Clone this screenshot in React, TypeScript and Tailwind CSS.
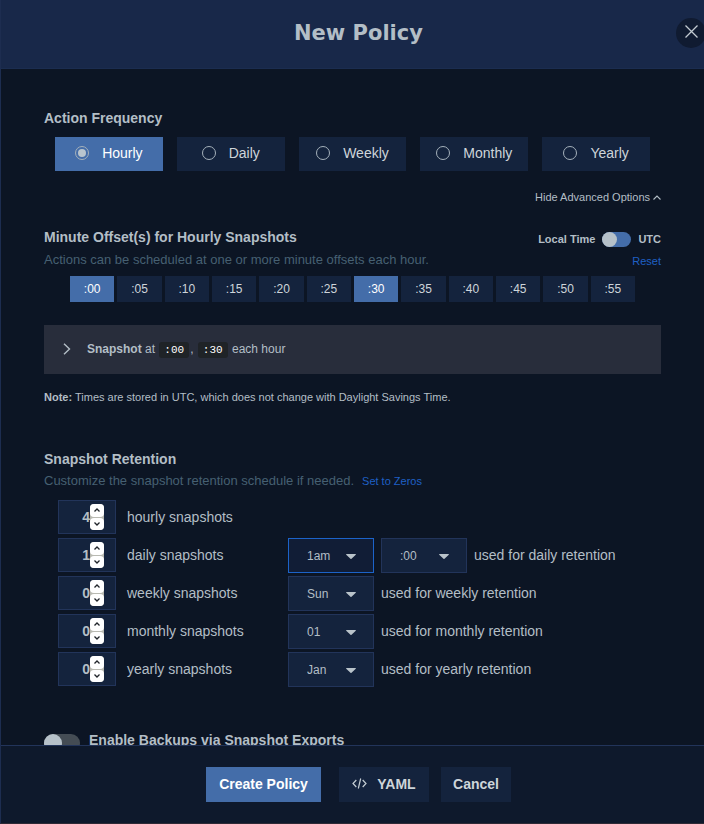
import { useState } from "react";

const frequencies = ["Hourly", "Daily", "Weekly", "Monthly", "Yearly"];

const minutes = [":00", ":05", ":10", ":15", ":20", ":25", ":30", ":35", ":40", ":45", ":50", ":55"];

const hours = ["12am", "1am", "2am", "3am", "4am", "5am", "6am", "7am", "8am", "9am", "10am", "11am"];
const weekdays = ["Sun", "Mon", "Tue", "Wed", "Thu", "Fri", "Sat"];
const monthDays = ["01", "02", "03", "04", "05", "06", "07", "08", "09", "10"];
const months = ["Jan", "Feb", "Mar", "Apr", "May", "Jun", "Jul", "Aug", "Sep", "Oct", "Nov", "Dec"];

type Picker = { id: string; value: string; options: string[]; active?: boolean };
type RetentionRow = { unit: string; count: number; pickers: Picker[] };

const retention: RetentionRow[] = [
  { unit: "hourly", count: 4, pickers: [] },
  {
    unit: "daily",
    count: 1,
    pickers: [
      { id: "daily-hour", value: "1am", options: hours, active: true },
      { id: "daily-minute", value: ":00", options: minutes },
    ],
  },
  { unit: "weekly", count: 0, pickers: [{ id: "weekly-day", value: "Sun", options: weekdays }] },
  { unit: "monthly", count: 0, pickers: [{ id: "monthly-day", value: "01", options: monthDays }] },
  { unit: "yearly", count: 0, pickers: [{ id: "yearly-month", value: "Jan", options: months }] },
];

function PickerSelect({ picker, label }: { picker: Picker; label: string }) {
  return (
    <div className="relative w-[86px]">
      <select
        id={picker.id}
        aria-label={label}
        defaultValue={picker.value}
        className={
          picker.active
            ? "block h-[35px] w-full appearance-none border border-[#1c63c9] bg-[#111d36] pl-[18px] text-xs outline-none"
            : "block h-[35px] w-full appearance-none border border-[#22345a] bg-[#14233d] pl-[18px] text-xs outline-none"
        }
      >
        {picker.options.map((option) => (
          <option key={option}>{option}</option>
        ))}
      </select>
      <svg
        viewBox="0 0 10 5"
        className="pointer-events-none absolute top-4 right-[18px] h-[5px] w-[10px] fill-[#b9c3ca]"
        aria-hidden="true"
      >
        <path d="M0.6 0h8.8c.5 0 .7.5.4.8L5.500 4.8a.7.7 0 0 1-1 0L.2.8C-.1.5.1 0 .6 0z" />
      </svg>
    </div>
  );
}

function Retention({ row }: { row: RetentionRow }) {
  const [count, setCount] = useState(row.count);
  const usage = `used for ${row.unit} retention`;
  const inputId = `${row.unit}-count`;
  return (
    <div className="grid h-[35px] grid-cols-[58px_150px_1fr] items-start gap-x-[11px] leading-[34px]">
      <div className="relative">
        <input
          id={inputId}
          type="number"
          min={0}
          value={count}
          onChange={(event) => setCount(Number(event.target.value))}
          className="block h-[34px] w-full border border-[#22345a] bg-[#14233d] pr-[25px] text-right text-sm font-bold outline-none [&::-webkit-inner-spin-button]:hidden [&::-webkit-inner-spin-button]:appearance-none"
        />
        <div className="absolute top-1 right-3 flex h-[26px] w-[14px] flex-col gap-px rounded-sm bg-[#b9bab2]">
          <button
            type="button"
            aria-label={`More ${row.unit} snapshots`}
            onClick={() => setCount(count + 1)}
            className="flex flex-1 items-center justify-center rounded-sm bg-white"
          >
            <svg viewBox="0 0 6 4" className="h-1 w-1.5 stroke-[#20242a]" fill="none" aria-hidden="true">
              <path d="M.5 3.500L3 1l2.500 2.500" strokeWidth="1.300" />
            </svg>
          </button>
          <button
            type="button"
            aria-label={`Fewer ${row.unit} snapshots`}
            onClick={() => setCount(Math.max(0, count - 1))}
            className="flex flex-1 items-center justify-center rounded-sm bg-white"
          >
            <svg viewBox="0 0 6 4" className="h-1 w-1.5 stroke-[#20242a]" fill="none" aria-hidden="true">
              <path d="M.5.5L3 3 5.500.5" strokeWidth="1.300" />
            </svg>
          </button>
        </div>
      </div>
      <label htmlFor={inputId}>{row.unit} snapshots</label>
      {row.pickers.length > 0 && (
        <div className="flex gap-[7px]">
          {row.pickers.map((picker) => (
            <PickerSelect key={picker.id} picker={picker} label={usage} />
          ))}
          <label htmlFor={row.pickers[0].id}>{usage}</label>
        </div>
      )}
    </div>
  );
}

export default function App() {
  const [frequency, setFrequency] = useState("Hourly");
  const [offsets, setOffsets] = useState([":00", ":30"]);

  const toggleOffset = (minute: string) =>
    setOffsets((current) =>
      current.includes(minute) ? current.filter((m) => m !== minute) : [...current, minute].sort(),
    );

  return (
    <div className="flex h-screen flex-col overflow-hidden border-b border-l border-b-[#2e2a35] border-l-[#1d2d50] bg-[#0c1524] font-['Liberation_Sans',Arial,sans-serif] text-sm leading-5 text-[#b3bec6]">
      <header className="relative flex h-[69px] shrink-0 items-center justify-center overflow-hidden border-b border-[#1b2d50] bg-[#182849] pb-0.5 pl-3">
        <h1 className="font-['DejaVu_Sans',sans-serif] text-[21px] leading-7 font-bold">New Policy</h1>
        <button
          type="button"
          aria-label="Close"
          className="absolute top-[18px] -right-0.5 flex h-[30px] w-[30px] justify-center rounded-full bg-[#101b31] pt-[7px]"
        >
          <svg viewBox="0 0 13 13" className="h-[13px] w-[13px] stroke-[#c3ccd2]" fill="none" aria-hidden="true">
            <path d="M.5.5l12 12M12.500.5l-12 12" strokeWidth="1.300" />
          </svg>
        </button>
      </header>

      <main className="min-h-0 flex-1 overflow-hidden px-[43px] pt-[39px]">
        <section>
          <h2 className="font-bold">Action Frequency</h2>
          <div className="mt-[9px] grid grid-cols-5 gap-[14px] px-[11px]">
            {frequencies.map((name) => (
              <label
                key={name}
                className={
                  name === frequency
                    ? "flex h-[34px] items-center justify-center gap-[13px] bg-[#446da9] pb-0.5 text-white"
                    : "flex h-[34px] items-center justify-center gap-[13px] bg-[#14233d] pb-0.5 text-[#ced5da]"
                }
              >
                <input
                  type="radio"
                  name="frequency"
                  checked={name === frequency}
                  onChange={() => setFrequency(name)}
                  className="grid h-[14px] w-[14px] appearance-none place-content-center rounded-full border border-[#a5b1bb] before:h-2 before:w-2 before:rounded-full checked:before:bg-[#b9c5ce]"
                />
                {name}
              </label>
            ))}
          </div>
          <div className="mt-[18px] flex justify-end">
            <button type="button" className="flex items-center gap-[3px] text-[11px] leading-4">
              Hide Advanced Options
              <svg viewBox="0 0 8 5" className="h-[5px] w-2 stroke-[#b3bec6]" fill="none" aria-hidden="true">
                <path d="M.5 4.500L4 1l3.500 3.500" strokeWidth="1.100" />
              </svg>
            </button>
          </div>
        </section>

        <section className="mt-[22px]">
          <div className="flex justify-between">
            <div>
              <h2 className="font-bold">Minute Offset(s) for Hourly Snapshots</h2>
              <p className="mt-1 text-[13px] leading-[18px] text-[#466072]">
                Actions can be scheduled at one or more minute offsets each hour.
              </p>
            </div>
            <div className="flex flex-col items-end pt-1 text-[11px] leading-4">
              <label className="flex items-center gap-[7px] font-bold">
                Local Time
                <input
                  type="checkbox"
                  role="switch"
                  className="h-[15px] w-[29px] appearance-none rounded-full bg-[#446da9] before:block before:h-[15px] before:w-[15px] before:rounded-full before:bg-[#b6c1c9] checked:before:ml-[14px]"
                />
                UTC
              </label>
              <button type="button" className="mt-[6px] text-[#1f60c4]">
                Reset
              </button>
            </div>
          </div>
          <div className="mt-[7px] grid grid-cols-12 gap-[3px] px-[26px]">
            {minutes.map((minute) => (
              <button
                key={minute}
                type="button"
                aria-pressed={offsets.includes(minute)}
                onClick={() => toggleOffset(minute)}
                className={
                  offsets.includes(minute)
                    ? "h-[26px] bg-[#446da9] text-xs text-white"
                    : "h-[26px] bg-[#14233d] text-xs text-[#ced5da]"
                }
              >
                {minute}
              </button>
            ))}
          </div>
          <button
            type="button"
            className="mt-[23px] flex h-[49px] w-full items-center gap-4 bg-[#282d3b] pb-px pl-[19px] text-left text-xs"
          >
            <svg viewBox="0 0 8 12" className="h-3 w-2 stroke-[#b3bec6]" fill="none" aria-hidden="true">
              <path d="M1 .7L6.500 6 1 11.300" strokeWidth="1.400" />
            </svg>
            <span>
              <b>Snapshot</b> at{" "}
              {offsets.map((minute, index) => (
                <span key={minute}>
                  {index > 0 && ", "}
                  <code className="mx-px rounded-[3px] bg-[#1f2327] px-[5px] py-[2px] font-['Liberation_Mono',monospace] text-[11px] text-white">
                    {minute}
                  </code>
                </span>
              ))}{" "}
              each hour
            </span>
          </button>
          <p className="mt-[15px] text-[11px] leading-4">
            <b>Note:</b> Times are stored in UTC, which does not change with Daylight Savings Time.
          </p>
        </section>

        <section className="mt-11">
          <h2 className="font-bold">Snapshot Retention</h2>
          <div className="mt-[3px] flex items-center gap-2 text-[13px] leading-[18px]">
            <p className="text-[#466072]">Customize the snapshot retention schedule if needed.</p>
            <button type="button" className="text-[11px] text-[#1f60c4]">
              Set to Zeros
            </button>
          </div>
          <div className="mt-[10px] ml-[14px] flex flex-col gap-[3px]">
            {retention.map((row) => (
              <Retention key={row.unit} row={row} />
            ))}
          </div>
        </section>

        <section className="mt-[43px]">
          <label className="flex items-start gap-[9px] font-bold">
            <input
              type="checkbox"
              role="switch"
              className="mt-1 h-[18px] w-9 appearance-none rounded-full bg-[#444c54] before:block before:h-[18px] before:w-[18px] before:rounded-full before:bg-[#b6c1c9] checked:before:ml-[18px]"
            />
            Enable Backups via Snapshot Exports
          </label>
        </section>
      </main>

      <footer className="flex shrink-0 justify-center border-t border-[#22345a] bg-[#0e192c] py-[21px] pl-3 font-bold">
        <button type="button" className="h-[35px] w-[115px] bg-[#446da9] pb-0.5 text-white">
          Create Policy
        </button>
        <button
          type="button"
          className="ml-[18px] flex h-[35px] w-[90px] items-center justify-center gap-[10px] bg-[#14233d] pb-0.5 text-[#ced5da]"
        >
          <svg viewBox="0 0 15 11" className="h-[11px] w-[15px] stroke-[#c3ccd2]" fill="none" aria-hidden="true">
            <path d="M4.300 2L1 5.500 4.300 9M10.700 2L14 5.500 10.700 9M8.700.5L6.300 10.500" strokeWidth="1.200" />
          </svg>
          YAML
        </button>
        <button type="button" className="ml-3 h-[35px] w-[70px] bg-[#14233d] pb-0.5 text-[#ced5da]">
          Cancel
        </button>
      </footer>
    </div>
  );
}
